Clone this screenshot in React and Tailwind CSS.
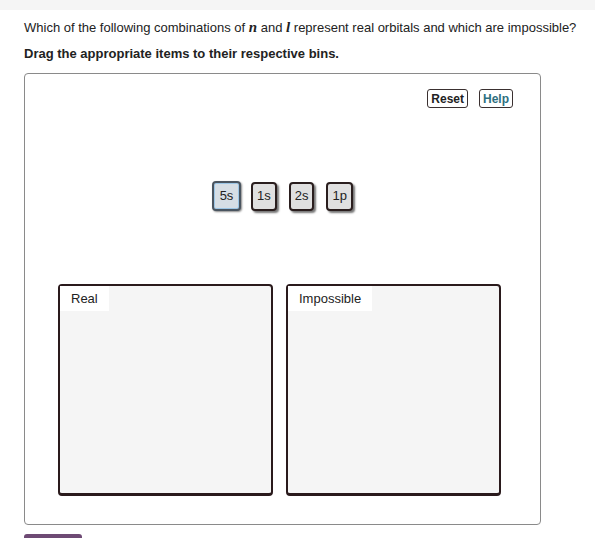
import React from 'react'

const Tile = ({ label, active }) => (
  <div
    className={
      active
        ? 'w-[29px] h-[30px] flex items-center justify-center rounded-[4px] border-2 border-[#4a5560] bg-[#d6dee5] shadow-[inset_0_0_0_1px_#9cc6e6,1px_1px_2px_#888] text-[13px] text-[#222]'
        : 'h-[29px] px-[4px] flex items-center justify-center rounded-[4px] border-2 border-[#2a1e1e] bg-[#e0e0e0] shadow-[2px_2px_2px_#777] text-[13px] text-[#222]'
    }
  >
    {label}
  </div>
)

const Bin = ({ label }) => (
  <div className="h-[212px] flex-1 rounded-[4px] border-2 border-b-[3px] border-[#2a1a1c] bg-[#f5f5f5]">
    <div className="inline-block bg-white px-[11px] pt-[3px] pb-[2px] text-[13px] text-[#222]">{label}</div>
  </div>
)

const App = () => {
  return (
    <div className="w-[595px] h-[538px] overflow-hidden bg-white font-['Liberation_Sans',Arial,sans-serif] text-[#222]">
      <div className="h-[10px] bg-[#f5f5f5]" />
      <div className="px-[24px]">
        <p className="mt-[7px] whitespace-nowrap text-[13px] leading-[20px]">
          Which of the following combinations of{' '}
          <i className="font-['Liberation_Serif',serif] font-bold text-[15px]">n</i> and{' '}
          <i className="font-['Liberation_Serif',serif] font-bold text-[15px]">l</i> represent real orbitals and which are impossible?
        </p>
        <p className="mt-[6px] text-[13px] leading-[20px] font-bold">Drag the appropriate items to their respective bins.</p>

        <div className="mt-[9px] w-[517px] h-[452px] rounded-[4px] border border-[#8a8a8a] flex flex-col">
          <div className="flex justify-end gap-[11px] pr-[27px] pt-[15px]">
            <button className="h-[19px] px-[3px] rounded-[3px] border border-[#3a3030] bg-white text-[12px] font-bold leading-none text-[#222]">Reset</button>
            <button className="h-[19px] px-[3px] rounded-[3px] border border-[#3a3030] bg-white text-[12px] font-bold leading-none text-[#2e6f80]">Help</button>
          </div>
          <div className="mt-[73px] flex items-center gap-[12px] pl-[187px]">
            <div className="mr-[-2px]">
              <Tile label="5s" active />
            </div>
            <Tile label="1s" />
            <Tile label="2s" />
            <Tile label="1p" />
          </div>
          <div className="mt-[73px] flex gap-[13px] pl-[33px] pr-[39px]">
            <Bin label="Real" />
            <Bin label="Impossible" />
          </div>
        </div>
        <div className="mt-[9px] w-[58px] h-[4px] rounded-t-[3px] bg-[#6e4a74]" />
      </div>
    </div>
  )
}

export default App
